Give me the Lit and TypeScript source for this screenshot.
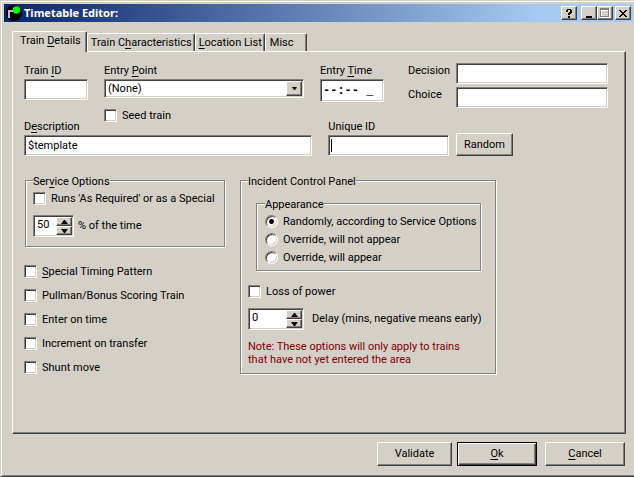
import { LitElement, html, css, nothing } from "lit";
import type { TemplateResult } from "lit";
import { customElement, property } from "lit/decorators.js";

const controls = css`
  * {
    box-sizing: border-box;
  }
  button,
  input,
  select {
    margin: 0;
    border-radius: 0;
    font: inherit;
    color: inherit;
    outline: none;
  }
  u {
    text-underline-offset: 2px;
  }
  .sunken {
    background: #fff;
    border: 1px solid;
    border-color: #808080 #fff #fff #808080;
    box-shadow: inset 1px 1px #404040, inset -1px -1px #d4d0c8;
  }
  .raised {
    background: #d4d0c8;
    border: 1px solid;
    border-color: #fff #404040 #404040 #fff;
    box-shadow: inset -1px -1px #808080;
    padding: 0;
  }
`;

@customElement("check-option")
class CheckOption extends LitElement {
  @property() kind = "checkbox";
  @property() group = "";
  @property({ type: Boolean }) checked = false;

  static styles = [
    controls,
    css`
      :host {
        display: block;
      }
      .option {
        display: flex;
        align-items: center;
        gap: 5px;
        height: 13px;
        line-height: 13px;
        white-space: nowrap;
      }
      .box {
        appearance: none;
        flex: none;
        width: 13px;
        height: 13px;
      }
      .round {
        border-radius: 50%;
        background: #fff;
      }
      .round:checked {
        background: radial-gradient(circle, #000 0 2px, #fff 3px);
      }
      .tick:checked {
        background: linear-gradient(#000, #000) center / 5px 5px no-repeat #fff;
      }
    `,
  ];

  render() {
    const radio = this.kind === "radio";
    return html`<label class="option">
      <input
        class="box sunken ${radio ? "round" : "tick"}"
        type=${this.kind}
        name=${this.group || nothing}
        .checked=${this.checked}
      />
      <span><slot></slot></span>
    </label>`;
  }
}

@customElement("spin-box")
class SpinBox extends LitElement {
  @property() value = "0";
  @property() label = "";

  static styles = [
    controls,
    css`
      :host {
        display: block;
      }
      .spin {
        display: flex;
        height: 22px;
        padding: 1px;
      }
      .value {
        flex: 1;
        min-width: 0;
        border: 0;
        background: none;
        padding: 0 0 2px 2px;
        appearance: textfield;
      }
      .value::-webkit-inner-spin-button {
        display: none;
      }
      .arrows {
        display: grid;
        grid-template-rows: 1fr 1fr;
        width: 16px;
      }
      .arrow {
        display: grid;
        place-items: center;
      }
    `,
  ];

  private step(by: number) {
    this.value = String(Number(this.value) + by);
  }

  render() {
    return html`<div class="spin sunken">
      <input class="value" type="number" aria-label=${this.label} .value=${this.value} />
      <span class="arrows">
        <button class="arrow raised" aria-label="Increase" @click=${() => this.step(1)}>
          <svg width="7" height="4"><path d="M3 0h1l3 4H0z" /></svg>
        </button>
        <button class="arrow raised" aria-label="Decrease" @click=${() => this.step(-1)}>
          <svg width="7" height="4"><path d="M0 0h7L4 4H3z" /></svg>
        </button>
      </span>
    </div>`;
  }
}

@customElement("app-root")
class AppRoot extends LitElement {
  static styles = [
    controls,
    css`
      :host {
        display: flex;
        flex-direction: column;
        box-sizing: border-box;
        min-height: 100vh;
        padding: 2px 0 0 2px;
        background: #d4d0c8;
        border: solid;
        border-width: 1px 0 1px 1px;
        border-color: #d4d0c8 #404040 #404040 #d4d0c8;
        box-shadow: inset 1px 1px #fff, inset 0 -1px #808080;
        color: #000;
        font: 11px/16px Roboto, sans-serif;
      }
      .titlebar {
        display: flex;
        align-items: center;
        height: 18px;
        margin: 1px 1px 0;
        padding: 0 2px;
        background: linear-gradient(90deg, #0a246a, #a6caf0 85%);
      }
      .title {
        flex: 1;
        margin: 0 0 0 2px;
        color: #fff;
        font: bold 11px/18px "Noto Sans", sans-serif;
      }
      .winbtn {
        display: grid;
        place-items: center;
        width: 16px;
        height: 14px;
      }
      .help {
        margin-right: 4px;
      }
      .max {
        margin-right: 2px;
      }
      .tabs {
        display: flex;
        align-items: flex-end;
        height: 20px;
        margin: 9px 8px 0 9px;
      }
      .tab {
        height: 18px;
        padding: 0 2px 0 3px;
        background: #d4d0c8;
        border: solid;
        border-width: 1px 1px 0;
        border-color: #fff #404040 #fff #fff;
        border-radius: 2px 2px 0 0;
        box-shadow: inset -1px 0 #808080;
        white-space: nowrap;
      }
      .tab.active {
        position: relative;
        z-index: 1;
        height: 21px;
        margin-bottom: -1px;
        padding: 0 5px 3px 7px;
      }
      .tab.short {
        padding: 0 12px 0 4px;
      }
      .panel {
        flex: 1;
        margin: 0 8px 0 9px;
        padding: 11px 17px 16px 11px;
        border: 1px solid;
        border-color: #fff #404040 #404040 #fff;
        box-shadow: inset -1px -1px #808080;
      }
      .row {
        display: flex;
      }
      .top {
        gap: 16px;
      }
      .field {
        display: flex;
        flex-direction: column;
      }
      .field label {
        line-height: 16px;
      }
      .text {
        display: block;
        width: 100%;
        height: 21px;
        padding: 0 3px;
      }
      .id,
      .time {
        width: 64px;
      }
      .time .text {
        height: 23px;
        padding: 0 2px;
        font: bold 12px "Liberation Mono", monospace;
      }
      .entry {
        flex: 1;
      }
      .combo {
        position: relative;
        margin-bottom: 11px;
      }
      .combo select {
        appearance: none;
        display: block;
        width: 100%;
        height: 19px;
        padding: 0 20px 0 3px;
      }
      .drop {
        position: absolute;
        top: 2px;
        right: 2px;
        display: grid;
        place-items: center;
        width: 16px;
        height: 15px;
        pointer-events: none;
      }
      .pairs {
        flex: 1;
        display: grid;
        grid-template-columns: 48px 1fr;
        row-gap: 3px;
        align-content: start;
        margin-left: 8px;
      }
      .second {
        align-items: flex-end;
        gap: 16px;
        margin-top: -3px;
      }
      .description {
        flex: 289;
      }
      .unique {
        flex: 121;
        position: relative;
      }
      .caret {
        position: absolute;
        left: 3px;
        bottom: 4px;
        width: 1px;
        height: 13px;
        background: #000;
      }
      .random {
        flex: none;
        width: 57px;
        height: 23px;
        margin: 0 95px 0 -9px;
      }
      .groups {
        display: grid;
        grid-template-columns: 200fr 256fr;
        align-items: start;
        gap: 15px;
        margin: 17px 112px 0 1px;
      }
      fieldset {
        min-width: 0;
        margin: 0;
        padding: 0 8px;
        border: 1px solid #808080;
        box-shadow: 1px 1px #fff, inset 1px 1px #fff;
      }
      legend {
        padding: 3px 0 0;
        line-height: 12px;
        background: #d4d0c8;
      }
      .service {
        padding: 4px 7px 9px;
      }
      .spinrow {
        display: flex;
        align-items: center;
        gap: 4px;
        margin-top: 10px;
        white-space: nowrap;
      }
      .percent {
        width: 41px;
      }
      .checks {
        display: grid;
        gap: 11px;
        margin: 18px 0 0 -1px;
      }
      .incident {
        padding: 8px 14px 7px 7px;
      }
      .appearance {
        display: grid;
        gap: 5px;
        margin: 0 0 14px 8px;
        padding: 4px 7px 6px 8px;
      }
      .delay {
        width: 56px;
      }
      .delayrow {
        gap: 8px;
      }
      .note {
        margin: 10px 0 0;
        line-height: 13px;
        color: #800000;
      }
      .footer {
        display: flex;
        justify-content: flex-end;
        gap: 8px;
        padding: 8px 9px 10px;
      }
      .action {
        width: 80px;
        height: 24px;
      }
      .validate {
        width: 75px;
        margin-right: -3px;
      }
      .default {
        border-color: #000;
        box-shadow: inset 1px 1px #fff, inset -1px -1px #404040, inset -2px -2px #808080;
      }
    `,
  ];

  private textField(id: string, caption: TemplateResult, cls: string, value = "") {
    return html`<div class="field ${cls}">
      <label for=${id}>${caption}</label>
      <input class="text sunken" id=${id} .value=${value} />
      ${id === "unique" ? html`<span class="caret"></span>` : nothing}
    </div>`;
  }

  private titleBar() {
    return html`<header class="titlebar">
      <svg width="16" height="16" viewBox="0 0 16 16">
        <circle cx="8" cy="8" r="8" />
        <path d="M3 13V6h5" fill="none" stroke="#c0c0c0" stroke-width="2" />
        <circle cx="10.5" cy="5" r="3.7" fill="#0f0" />
      </svg>
      <h1 class="title">Timetable Editor:</h1>
      <button class="winbtn raised help" aria-label="Help">
        <svg width="8" height="9" shape-rendering="crispEdges">
          <path d="M2 0h4v1h1v3H6v1H5v1H3V4h1V3h1V1H3v2H1V1h1zM3 7h2v2H3z" />
        </svg>
      </button>
      <button class="winbtn raised" aria-label="Minimize">
        <svg width="8" height="9" shape-rendering="crispEdges"><path d="M1 7h6v2H1z" /></svg>
      </button>
      <button class="winbtn raised max" aria-label="Maximize" disabled>
        <svg width="10" height="10" shape-rendering="crispEdges">
          <path d="M1 1h9v9H1zM2 3v6h7V3z" fill="#fff" fill-rule="evenodd" />
          <path d="M0 0h9v9H0zM1 2v6h7V2z" fill="#808080" fill-rule="evenodd" />
        </svg>
      </button>
      <button class="winbtn raised" aria-label="Close">
        <svg width="8" height="7" shape-rendering="crispEdges">
          <path d="M0 0h2v1h1v1h2V1h1V0h2v1H7v1H6v1H5v1h1v1h1v1h1v1H6V6H5V5H3v1H2v1H0V6h1V5h1V4h1V3H2V2H1V1H0z" />
        </svg>
      </button>
    </header>`;
  }

  render() {
    return html`
      ${this.titleBar()}
      <nav class="tabs" role="tablist">
        <button class="tab active" role="tab" aria-selected="true">Train <u>D</u>etails</button>
        <button class="tab" role="tab">Train C<u>h</u>aracteristics</button>
        <button class="tab" role="tab"><u>L</u>ocation List</button>
        <button class="tab short" role="tab">Misc</button>
      </nav>
      <main class="panel" role="tabpanel">
        <div class="row top">
          ${this.textField("train", html`Train <u>I</u>D`, "id")}
          <div class="field entry">
            <label for="entry">Entry <u>P</u>oint</label>
            <div class="combo">
              <select class="sunken" id="entry">
                <option>(None)</option>
              </select>
              <span class="drop raised">
                <svg width="5" height="3"><path d="M0 0h5L3 3H2z" /></svg>
              </span>
            </div>
            <check-option>Seed train</check-option>
          </div>
          ${this.textField("time", html`Entry <u>T</u>ime`, "time", "--:-- _")}
          <div class="pairs">
            <label for="decision">Decision</label>
            <input class="text sunken" id="decision" />
            <label for="choice">Choice</label>
            <input class="text sunken" id="choice" />
          </div>
        </div>
        <div class="row second">
          ${this.textField("description", html`D<u>e</u>scription`, "description", "$template")}
          ${this.textField("unique", html`Unique ID`, "unique")}
          <button class="raised random">Random</button>
        </div>
        <div class="groups">
          <div>
            <fieldset class="service">
              <legend>Ser<u>v</u>ice Options</legend>
              <check-option>Runs 'As Required' or as a Special</check-option>
              <div class="spinrow">
                <spin-box class="percent" value="50" label="% of the time"></spin-box>
                <span>% of the time</span>
              </div>
            </fieldset>
            <div class="checks">
              <check-option><u>S</u>pecial Timing Pattern</check-option>
              <check-option>Pullman/Bonus Scoring Train</check-option>
              <check-option>Enter on time</check-option>
              <check-option>Increment on transfer</check-option>
              <check-option>Shunt move</check-option>
            </div>
          </div>
          <fieldset class="incident">
            <legend>Incident Control Panel</legend>
            <fieldset class="appearance">
              <legend>Appearance</legend>
              <check-option kind="radio" group="appearance" checked>Randomly, according to Service Options</check-option>
              <check-option kind="radio" group="appearance">Override, will not appear</check-option>
              <check-option kind="radio" group="appearance">Override, will appear</check-option>
            </fieldset>
            <check-option>Loss of power</check-option>
            <div class="spinrow delayrow">
              <spin-box class="delay" value="0" label="Delay in minutes"></spin-box>
              <span>Delay (mins, negative means early)</span>
            </div>
            <p class="note">Note: These options will only apply to trains<br />that have not yet entered the area</p>
          </fieldset>
        </div>
      </main>
      <footer class="footer">
        <button class="raised action validate">Validate</button>
        <button class="raised action default"><u>O</u>k</button>
        <button class="raised action"><u>C</u>ancel</button>
      </footer>
    `;
  }
}
